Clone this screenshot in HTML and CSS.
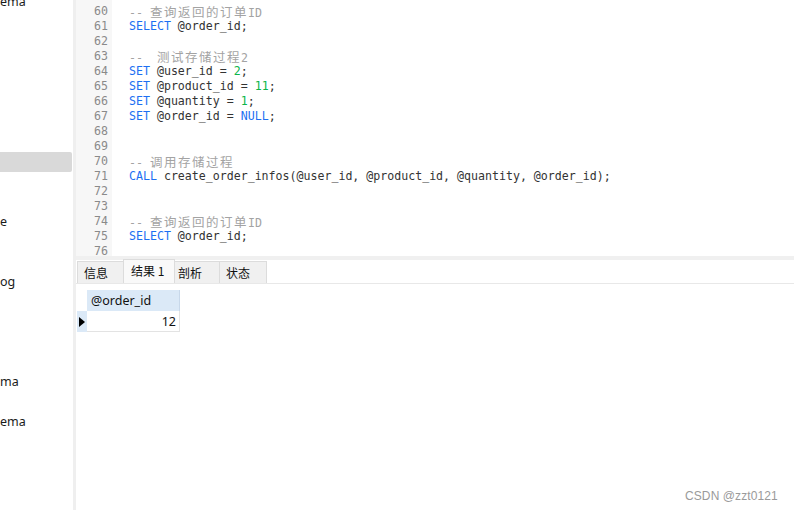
FILE: index.html
```html
<!DOCTYPE html>
<html lang="zh">
<head>
<meta charset="utf-8">
<title>Query</title>
<link rel="stylesheet" href="styles.css">
</head>
<body>
<div class="app">
  <aside class="sidebar">
    <ul class="tree">
      <li class="node">ema</li>
      <li class="node"></li>
      <li class="node"></li>
      <li class="node"></li>
      <li class="node"></li>
      <li class="node"></li>
      <li class="node"></li>
      <li class="node"></li>
      <li class="node selected"></li>
      <li class="node"></li>
      <li class="node"></li>
      <li class="node">e</li>
      <li class="node"></li>
      <li class="node"></li>
      <li class="node">og</li>
      <li class="node"></li>
      <li class="node"></li>
      <li class="node"></li>
      <li class="node"></li>
      <li class="node">ma</li>
      <li class="node"></li>
      <li class="node">ema</li>
      <li class="node"></li>
      <li class="node"></li>
      <li class="node"></li>
      <li class="node"></li>
    </ul>
  </aside>
  <div class="splitter"></div>
  <main class="main">
    <section class="editor">
      <div class="gutter">
        <div class="ln">60</div><div class="ln">61</div><div class="ln">62</div><div class="ln">63</div>
        <div class="ln">64</div><div class="ln">65</div><div class="ln">66</div><div class="ln">67</div>
        <div class="ln">68</div><div class="ln">69</div><div class="ln">70</div><div class="ln">71</div>
        <div class="ln">72</div><div class="ln">73</div><div class="ln">74</div><div class="ln">75</div>
        <div class="ln">76</div>
      </div>
      <div class="code">
        <div class="line"><span class="cm">-- <span class="cjk">查询返回的订单</span>ID</span></div>
        <div class="line"><span class="kw">SELECT</span> @order_id;</div>
        <div class="line"></div>
        <div class="line"><span class="cm">--  <span class="cjk">测试存储过程</span>2</span></div>
        <div class="line"><span class="kw">SET</span> @user_id = <span class="num">2</span>;</div>
        <div class="line"><span class="kw">SET</span> @product_id = <span class="num">11</span>;</div>
        <div class="line"><span class="kw">SET</span> @quantity = <span class="num">1</span>;</div>
        <div class="line"><span class="kw">SET</span> @order_id = <span class="kw">NULL</span>;</div>
        <div class="line"></div>
        <div class="line"></div>
        <div class="line"><span class="cm">-- <span class="cjk">调用存储过程</span></span></div>
        <div class="line"><span class="kw">CALL</span> create_order_infos(@user_id, @product_id, @quantity, @order_id);</div>
        <div class="line"></div>
        <div class="line"></div>
        <div class="line"><span class="cm">-- <span class="cjk">查询返回的订单</span>ID</span></div>
        <div class="line"><span class="kw">SELECT</span> @order_id;</div>
        <div class="line"></div>
      </div>
    </section>
    <div class="band"></div>
    <nav class="tabs">
      <div class="tab">信息</div>
      <div class="tab active">结果 1</div>
      <div class="tab">剖析</div>
      <div class="tab">状态</div>
    </nav>
    <section class="results">
      <div class="grid">
        <div class="ind head"></div>
        <div class="cell head">@order_id</div>
        <div class="ind cur"><span class="tri"></span></div>
        <div class="cell val">12</div>
      </div>
    </section>
    <div class="watermark">CSDN @zzt0121</div>
  </main>
</div>
</body>
</html>
```

FILE: styles.css
```css
* { box-sizing: border-box; }
html, body { margin: 0; padding: 0; }
body {
  width: 794px;
  height: 510px;
  overflow: hidden;
  background: #ffffff;
  font-family: "Noto Sans", "Liberation Sans", "Noto Sans CJK SC", sans-serif;
}
.app {
  display: flex;
  width: 794px;
  height: 510px;
}
.sidebar {
  width: 73px;
  flex: none;
  overflow: hidden;
  background: #ffffff;
}
.tree {
  list-style: none;
  margin: -8px 0 0 0;
  padding: 0;
}
.node {
  height: 20px;
  line-height: 20px;
  font-size: 12.5px;
  color: #1a1a1a;
  padding-left: 0;
  white-space: nowrap;
}
.node.selected {
  background: #d9d9d9;
  width: 72px;
  border-radius: 0 2px 2px 0;
}
.splitter {
  width: 3px;
  flex: none;
  background: #efefef;
}
.main {
  position: relative;
  flex: 1;
  display: flex;
  flex-direction: column;
  min-width: 0;
}
.editor {
  height: 256px;
  flex: none;
  display: flex;
  overflow: hidden;
  background: #ffffff;
}
.gutter {
  width: 36px;
  flex: none;
  background: #f7f7f7;
  padding-top: 4px;
  padding-right: 4px;
  font-family: "DejaVu Sans Mono", "Liberation Mono", monospace;
  font-size: 11.6px;
  color: #8a8a8a;
  text-align: right;
}
.ln { height: 15px; line-height: 15px; }
.code {
  flex: 1;
  padding-top: 4px;
  padding-left: 17px;
  font-family: "DejaVu Sans Mono", "Liberation Mono", monospace;
  font-size: 11.6px;
  color: #333333;
}
.line { height: 15px; line-height: 15px; white-space: pre; }
.kw { color: #1c6ff2; }
.num { color: #0cb54a; }
.cm { color: #a3a3a3; }
.cjk {
  font-family: "Noto Sans CJK SC", sans-serif;
  font-size: 12.5px;
  letter-spacing: 1.5px;
  line-height: 15px;
}
.band {
  height: 4px;
  flex: none;
  background: #f0f0f0;
}
.tabs {
  height: 24px;
  flex: none;
  display: flex;
  align-items: flex-end;
  padding-left: 1px;
  border-bottom: 1px solid #e8e8e8;
}
.tab {
  height: 22px;
  line-height: 22px;
  padding: 0 6px;
  font-family: "Noto Sans CJK SC", sans-serif;
  font-size: 12px;
  color: #111111;
  background: #f0f0f0;
  border: 1px solid #dcdcdc;
  border-bottom: none;
  margin-right: -1px;
}
.tab:nth-child(1) { width: 47px; }
.tab:nth-child(3) { width: 46px; padding-left: 3px; }
.tab:nth-child(4) { width: 48px; }
.tab.active {
  height: 24px;
  width: 52px;
  padding-left: 7px;
  line-height: 22px;
  background: #f9f9f9;
  position: relative;
  z-index: 1;
}
.results {
  flex: 1;
  padding: 6px 0 0 1px;
}
.grid {
  display: grid;
  grid-template-columns: 10px 93px;
  grid-template-rows: 21px 21px;
}
.ind { background: #ffffff; }
.ind.cur {
  background: #dbe9f7;
  display: flex;
  align-items: center;
  justify-content: center;
}
.tri {
  width: 0;
  height: 0;
  border-top: 5px solid transparent;
  border-bottom: 5px solid transparent;
  border-left: 6px solid #000000;
}
.cell {
  font-size: 12.5px;
  color: #111111;
  line-height: 21px;
  padding: 0 4px;
}
.cell.head {
  background: #dbe9f7;
  border-right: 1px solid #c8d8ea;
}
.cell.val {
  text-align: right;
  padding-right: 3px;
  background: #ffffff;
  border-right: 1px solid #e3e3e3;
  border-bottom: 1px solid #e3e3e3;
}
.watermark {
  position: absolute;
  left: 609px;
  top: 489px;
  font-family: "Liberation Sans", sans-serif;
  font-size: 12px;
  color: #9a9a9a;
  letter-spacing: 0.1px;
}
```
